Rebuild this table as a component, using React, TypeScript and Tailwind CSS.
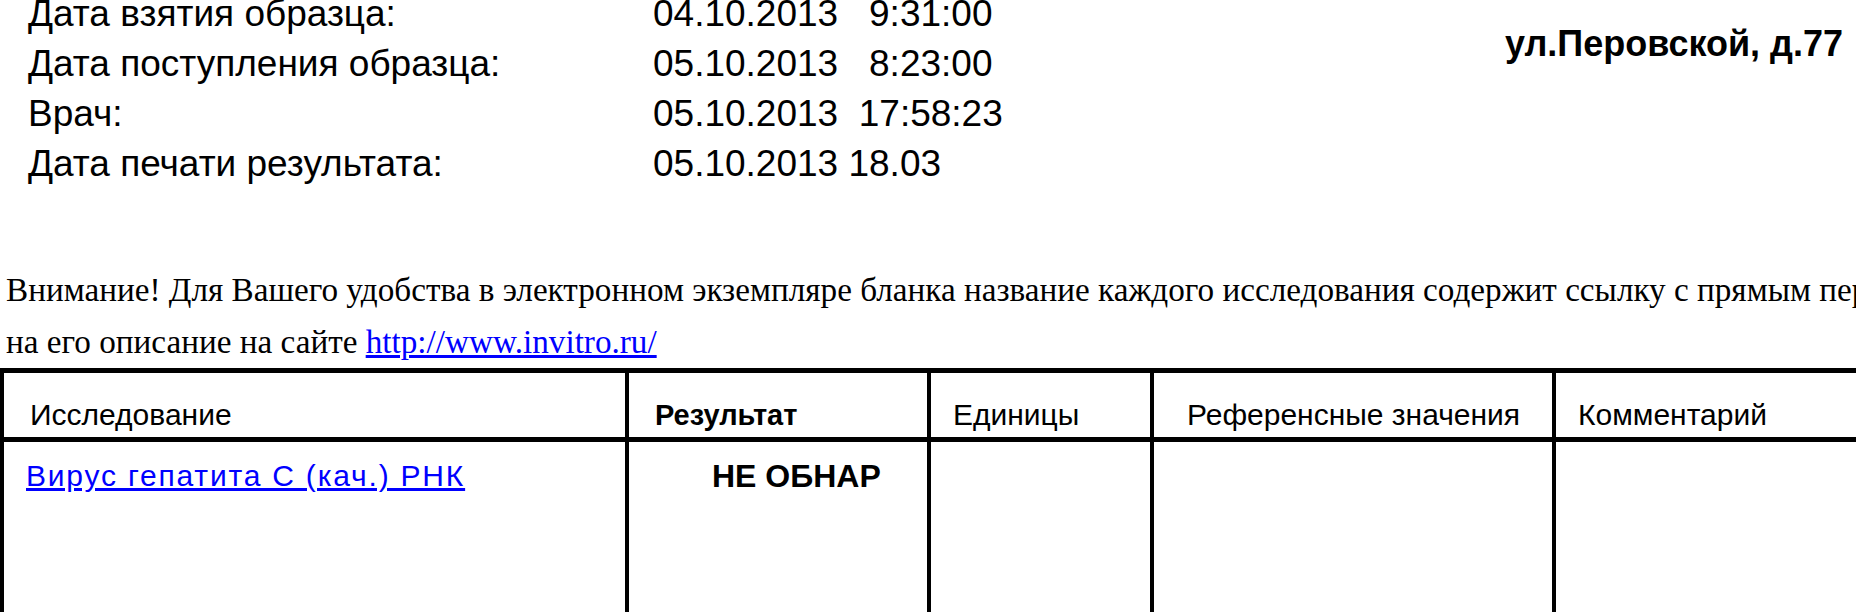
import React, { Fragment } from 'react';

const sampleDates = [
  { label: 'Дата взятия образца:', value: '04.10.2013   9:31:00' },
  { label: 'Дата поступления образца:', value: '05.10.2013   8:23:00' },
  { label: 'Врач:', value: '05.10.2013  17:58:23' },
  { label: 'Дата печати результата:', value: '05.10.2013 18.03' },
];

const columns = [
  { title: 'Исследование', style: 'pl-[26px]' },
  { title: 'Результат', style: 'pl-[26px] font-bold text-[29px]' },
  { title: 'Единицы', style: 'pl-[22px]' },
  { title: 'Референсные значения', style: 'pl-[33px]' },
  { title: 'Комментарий', style: 'pl-[22px]' },
];

export default function App() {
  return (
    <div className="w-[1856px] h-[612px] overflow-hidden bg-white text-black font-['Liberation_Sans',Arial,sans-serif]">
      {/* Sample info */}
      <div className="flex justify-between -mt-[11px]">
        <div className="grid grid-cols-[625px_auto] pl-[28px] text-[37px] leading-[50px]">
          {sampleDates.map((row) => (
            <Fragment key={row.label}>
              <div>{row.label}</div>
              <div className="whitespace-pre">{row.value}</div>
            </Fragment>
          ))}
        </div>
        <div className="pt-[30px] pr-[13px] text-[36px] leading-[50px] font-bold whitespace-nowrap">
          ул.Перовской, д.77
        </div>
      </div>

      {/* Notice */}
      <div className="mt-[75px] pl-[6px] font-['Liberation_Serif','Times_New_Roman',serif] text-[33.2px] leading-[52px]">
        <div className="whitespace-nowrap">
          Внимание! Для Вашего удобства в электронном экземпляре бланка название каждого исследования содержит ссылку с прямым переходом
        </div>
        <div>
          на его описание на сайте{' '}
          <a href="#" className="text-[#0000ff] underline">
            http://www.invitro.ru/
          </a>
        </div>
      </div>

      {/* Results table */}
      <div className="border-t-[5px] border-l-[4px] border-black text-[30px] leading-[36px]">
        <div className="grid grid-cols-[625px_302px_223px_402px_1fr] border-b-[5px] border-black">
          {columns.map((col, i) => (
            <div
              key={col.title}
              className={`h-[64px] pt-[24px] whitespace-nowrap ${col.style} ${
                i < columns.length - 1 ? 'border-r-[4px] border-black' : ''
              }`}
            >
              {col.title}
            </div>
          ))}
        </div>
        <div className="grid grid-cols-[625px_302px_223px_402px_1fr]">
          <div className="h-[180px] pt-[16px] pl-[22px] border-r-[4px] border-black">
            <a href="#" className="text-[#0000ff] underline tracking-[1.8px]">
              Вирус гепатита С (кач.) РНК
            </a>
          </div>
          <div className="h-[180px] pt-[16px] pl-[83px] border-r-[4px] border-black font-bold text-[32px]">
            НЕ ОБНАР
          </div>
          <div className="h-[180px] border-r-[4px] border-black" />
          <div className="h-[180px] border-r-[4px] border-black" />
          <div className="h-[180px]" />
        </div>
      </div>
    </div>
  );
}
